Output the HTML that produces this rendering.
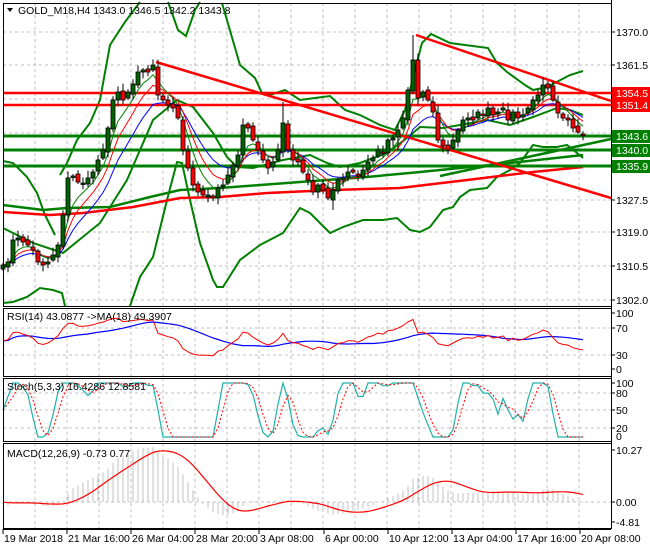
<!DOCTYPE html>
<html><head><meta charset="utf-8"><style>
html,body{margin:0;padding:0;background:#fff;width:650px;height:550px;overflow:hidden}
svg{display:block;font-family:"Liberation Sans",sans-serif}
</style></head><body>
<svg id="s" width="650" height="550" xmlns="http://www.w3.org/2000/svg"></svg>
<script>
var C=[265,262,240,238,242,245,250,262,265,262,255,245,215,178,176,182,183,178,172,160,150,128,100,92,100,92,84,72,70,72,65,95,100,105,108,118,150,168,185,192,195,195,198,188,185,175,165,155,125,128,140,150,160,168,162,150,123,150,160,162,172,180,192,185,190,198,190,180,178,172,172,176,170,162,158,150,152,140,138,130,118,90,60,98,92,100,112,140,146,150,140,130,120,118,120,112,115,108,115,112,108,120,112,118,115,108,100,95,85,88,100,113,118,120,128,132,135];
var h='';
function L(x1,y1,x2,y2,c,w,d){h+='<line x1="'+x1+'" y1="'+y1+'" x2="'+x2+'" y2="'+y2+'" stroke="'+c+'" stroke-width="'+(w||1)+'"'+(d?' stroke-dasharray="'+d+'"':'')+'/>';}
function P(pts,c,w,d){h+='<polyline fill="none" points="'+pts.map(function(p){return p[0].toFixed(1)+','+p[1].toFixed(1)}).join(' ')+'" stroke="'+c+'" stroke-width="'+(w||1)+'"'+(d?' stroke-dasharray="'+d+'"':'')+'/>';}
function T(x,y,t,c,fs,anc){h+='<text x="'+x+'" y="'+y+'" fill="'+(c||'#000')+'" font-size="'+(fs||10.5)+'"'+(anc?' text-anchor="'+anc+'"':'')+'>'+t+'</text>';}
var panes=[[3,306],[308,376],[378,441],[443,528]];
for(var gx=3+32;gx<611;gx+=32){panes.forEach(function(p){L(gx,p[0],gx,p[1],'#c0c0c0',1,'3,3')});}
[32,65,99,133,166,200,232,266,300].forEach(function(y){L(3,y,611,y,'#c0c0c0',1,'3,3')});
[328,355,393,410,428,502].forEach(function(y){L(3,y,611,y,'#c0c0c0',1,'3,3')});
function pr(y){return 1370-(y-32)/3.94}
var n=C.length,X=[],O=[],Hh=[],Lo=[];
for(var i=0;i<n;i++){X.push(3+5*i);var o=i?C[i-1]+(((i*29)%5)-2):C[0]+4;O.push(o);var r1=2+((i*37)%7)*0.9,r2=2+((i*53)%5)*1.1;Hh.push(Math.min(o,C[i])-r1);Lo.push(Math.max(o,C[i])+r2);}
Hh[82]=35;Hh[56]=102;Lo[66]=210;Lo[79]=150;
function ema(a,p){var k=2/(p+1),r=[],v=a[0];a.forEach(function(x){v=v+(x-v)*k;r.push(v)});return r}
function sma(a,p){var r=[];for(var i=0;i<a.length;i++){var s=0,c=0;for(var j=Math.max(0,i-p+1);j<=i;j++){s+=a[j];c++}r.push(s/c)}return r}
P([[3,228],[33,243],[63,253],[100,223],[127,180],[153,120],[177,100],[193,107],[213,133],[227,157],[237,167],[253,168],[283,160],[310,155],[327,163],[340,167],[360,163],[387,153],[407,138],[420,127],[443,128],[460,125],[487,120],[510,125],[533,117],[557,108],[570,110],[583,115]],'#008000',2);
P([[3,161],[13,163],[27,177],[37,193],[45,215],[55,235]],'#008000',2);
P([[60,175],[67,163],[77,140],[90,123],[100,100],[110,45],[125,22],[140,2]],'#008000',2);
P([[168,2],[178,30],[186,36],[195,10],[200,2]],'#008000',2);
P([[222,3],[240,65],[255,78],[262,93],[270,95],[285,90],[300,100],[315,98],[330,96],[345,110],[360,115],[380,125],[395,130],[405,110],[415,70],[422,43],[431,34],[450,43],[488,48],[497,63],[507,72],[525,85],[533,90],[547,87],[570,75],[583,71]],'#008000',2);
P([[3,303],[13,302],[27,297],[40,288],[53,290],[62,293],[65,306]],'#008000',2);
P([[130,306],[140,277],[153,257],[167,200],[177,162],[182,163],[190,200],[200,243],[213,280],[217,287],[223,287],[240,260],[260,245],[283,233],[300,208],[310,213],[330,233],[343,227],[363,220],[383,220],[397,218],[410,230],[420,232],[430,227],[443,210],[453,207],[460,197],[470,190],[487,188],[497,177],[510,170],[520,163],[533,145],[543,147],[557,147],[567,145],[577,153],[583,158]],'#008000',2);
P([[3,205],[43,210],[67,208],[110,207],[150,197],[180,190],[220,188],[300,182],[367,177],[420,172],[510,163],[583,155]],'#008000',2.5);
P([[3,212],[50,215],[83,213],[133,207],[180,198],[220,197],[267,193],[333,190],[400,188],[467,180],[533,172],[583,167]],'#ff0000',2.5);
L(440,176,611,139,'#008000',2.5);
L(3,93,611,93,'#ff0000',2.5);L(3,105,611,105,'#ff0000',2.5);
L(3,136,611,136,'#008000',3);L(3,150,611,150,'#008000',3);L(3,166,611,166,'#008000',3);
L(156,62,611,198,'#ff0000',2.5);L(416,35,611,101,'#ff0000',2.5);
var e1=ema(C,5),e2=ema(C,8),e3=ema(C,13);
P(X.map(function(x,i){return[x,e3[i]]}),'#0000ff',1);
P(X.map(function(x,i){return[x,e2[i]]}),'#ff0000',1);
P(X.map(function(x,i){return[x,e1[i]]}),'#008000',1);
for(var i=0;i<n;i++){var x=X[i];L(x,Hh[i],x,Lo[i],'#000',1);var t=Math.min(O[i],C[i]),b=Math.max(O[i],C[i]);if(b-t<1.5)b=t+1.5;
h+='<rect x="'+(x-2)+'" y="'+t+'" width="4" height="'+(b-t)+'" fill="'+(C[i]<O[i]?'#006400':'#ff0000')+'" stroke="#000" stroke-width="0.8"/>';}
var Pp=C.map(pr),g=[],l=[];for(var i=0;i<n;i++){var d=i?Pp[i]-Pp[i-1]:0;g.push(Math.max(d,0));l.push(Math.max(-d,0))}
var ag=1,al=1,rsi=[];for(var i=0;i<n;i++){ag=(ag*9+g[i])/10;al=(al*9+l[i])/10;rsi.push(100-100/(1+ag/(al||1e-6)))}
var rma=sma(rsi,18);
P(X.map(function(x,i){return[x,369-rma[i]*0.56]}),'#0000ff',1.2);
P(X.map(function(x,i){return[x,369-rsi[i]*0.56]}),'#ff0000',1);
var raw=[];for(var i=0;i<n;i++){var hh=1e9,ll=-1e9;for(var j=Math.max(0,i-4);j<=i;j++){hh=Math.min(hh,C[j]);ll=Math.max(ll,C[j])}raw.push(ll-hh<0.5?50:(ll-C[i])/(ll-hh)*100)}
var K=sma(raw,2),D=sma(K,3);
P(X.map(function(x,i){return[x,437-K[i]*0.54]}),'#20b2aa',1.2);
P(X.map(function(x,i){return[x,437-D[i]*0.54]}),'#ff0000',1,'2,2');
var pre=[];for(var i=0;i<30;i++)pre.push(pr(245));var PP=pre.concat(Pp);
var m12=ema(PP,12),m26=ema(PP,26),mac=[];for(var i=0;i<PP.length;i++)mac.push(m12[i]-m26[i]);var sg=sma(mac,9);mac=mac.slice(30);sg=sg.slice(30);
for(var i=0;i<n;i++){L(X[i],502,X[i],502-mac[i]*5.06,'#c0c0c0',1)}
P(X.map(function(x,i){return[x,502-sg[i]*5.06]}),'#ff0000',1.2);
panes.forEach(function(p){h+='<rect x="3.5" y="'+(p[0]+.5)+'" width="608" height="'+(p[1]-p[0])+'" fill="none" stroke="#000"/>'});
h+='<rect x="612" y="0" width="38" height="550" fill="#fff"/>';
h+='<rect x="0" y="530" width="650" height="20" fill="#fff"/>';
L(611.5,0,611.5,529,'#000',1);
[[32,'1370.0'],[65,'1361.5'],[200,'1327.5'],[232,'1319.0'],[266,'1310.5'],[300,'1302.0'],[313,'100'],[328,'70'],[355,'30'],[369,'0'],[383,'100'],[393,'80'],[410,'50'],[428,'20'],[450,'10.27'],[502,'0.00'],[522,'-4.81']].forEach(function(a){L(611,a[0],615,a[0],'#000');T(616,a[0]+4,a[1],'#000',10.5)});
T(616,440,'0','#000',10.5);
[[93,'1354.5','#ff0000'],[105,'1351.4','#ff0000'],[136,'1343.6','#008000'],[150,'1340.0','#008000'],[166,'1335.9','#008000']].forEach(function(a){h+='<rect x="612" y="'+(a[0]-6)+'" width="38" height="13" fill="'+a[2]+'"/>';T(616,a[0]+4,a[1],'#fff',10.5)});
L(3,529.5,611,529.5,'#000');
var tl=['19 Mar 2018','21 Mar 16:00','26 Mar 04:00','28 Mar 20:00','3 Apr 08:00','6 Apr 00:00','10 Apr 12:00','13 Apr 04:00','17 Apr 16:00','20 Apr 08:00'];
tl.forEach(function(t,k){var x=3+64*k+(k>4?1:0);L(x,529,x,534,'#000');T(x+1,542,t,'#000',10.5)});
h+='<polygon points="7,8 13,8 10,12" fill="#000"/>';
T(18,14,'GOLD_M18,H4  1343.0 1346.5 1342.2 1343.8','#000',10.5);
T(7,320,'RSI(14) 43.0877  -&gt;MA(18) 49.3907','#000',10.5);
T(7,390,'Stoch(5,3,3) 16.4286 12.8581','#000',10.5);
T(7,457,'MACD(12,26,9) -0.73 0.77','#000',10.5);
document.getElementById('s').innerHTML=h;
</script>
</body></html>
